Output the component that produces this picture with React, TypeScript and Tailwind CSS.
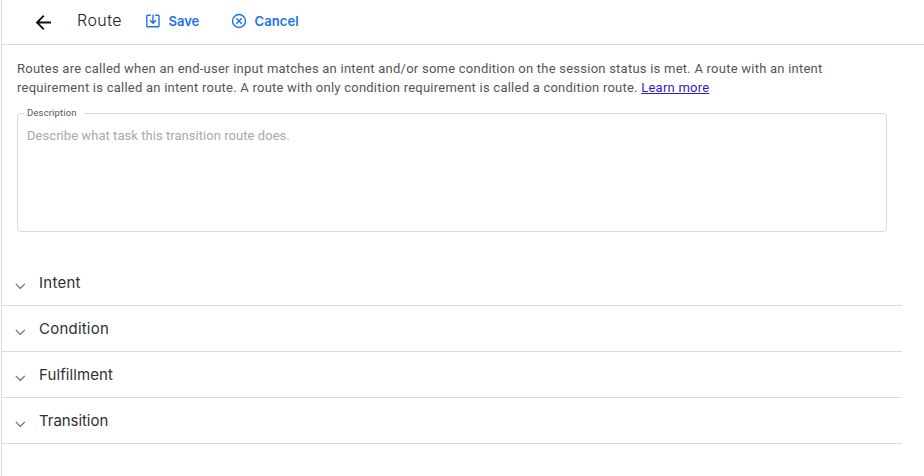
const sections = [
  { title: 'Intent', spacing: 'tracking-[0.25px]' },
  { title: 'Condition', spacing: 'tracking-[0.22px]' },
  { title: 'Fulfillment', spacing: 'tracking-[0.1px]' },
  { title: 'Transition', spacing: 'tracking-[-0.05px]' },
];

function BackIcon() {
  return (
    <svg width="16" height="16" viewBox="0 0 16 16" fill="none" stroke="#111" strokeWidth="1.9">
      <path d="M16 8.500H2.500M8.800 1.700L2 8.500l6.800 6.800" />
    </svg>
  );
}

function SaveIcon() {
  return (
    <svg width="14" height="14" viewBox="0 0 14 14" fill="none" stroke="#1a73e8" strokeWidth="1.4">
      <path d="M4.800 1.200H1.700a.9.9 0 0 0-.9.9v9.800c0 .5.4.9.9.9h10.400c.5 0 .9-.4.9-.9V2.100a.9.9 0 0 0-.9-.9H9.200M7 .6v8.300M4 6.200l3 3 3-3" />
    </svg>
  );
}

function CancelIcon() {
  return (
    <svg width="16" height="16" viewBox="0 0 16 16" fill="none" stroke="#1a73e8" strokeWidth="1.4">
      <circle cx="8" cy="8" r="6.5" />
      <path d="M5.3 5.3l5.4 5.4M10.7 5.3l-5.4 5.4" />
    </svg>
  );
}

function Chevron() {
  return (
    <svg width="12" height="8" viewBox="0 0 12 8" fill="none" stroke="#666" strokeWidth="1.1">
      <path d="M1.8 1.9L6.3 6.4l4.5-4.5" />
    </svg>
  );
}

export default function App() {
  return (
    <div className="flex h-[476px] w-[924px] overflow-hidden bg-white pl-px font-['Roboto',sans-serif]">
      <main className="flex flex-1 flex-col border-l border-[#d9dadc]">
        <header className="flex h-[45px] items-center border-b border-[#d9dadc] pl-[33px] font-['Inter',sans-serif]">
          <button><BackIcon /></button>
          <h1 className="ml-[26px] w-[68.500px] pb-1 text-base leading-5 font-light tracking-[0.45px] text-[#202124]">Route</h1>
          <button className="flex w-[85px] items-center gap-[9px] pb-0.5 text-[13px] leading-5 font-semibold text-[#1a73e8]">
            <SaveIcon />
            <span>Save</span>
          </button>
          <button className="flex items-center gap-2 pb-0.5 text-[13px] leading-5 font-semibold tracking-[0.1px] text-[#1a73e8]">
            <CancelIcon />
            <span>Cancel</span>
          </button>
        </header>
        <p className="mt-[14px] ml-[15px] text-[13px] leading-[19px] tracking-[0.237px] whitespace-nowrap text-[#555]">
          Routes are called when an end-user input matches an intent and/or some condition on the session status is met. A route with an intent
          <br />
          requirement is called an intent route. A route with only condition requirement is called a condition route.{' '}
          <a className="text-[#2a1fd0] underline">Learn more</a>
        </p>
        <fieldset className="mt-[10px] ml-[15px] h-[125px] w-[870px] rounded border border-[#d9dadc] pl-[6px]">
          <legend className="h-3 pr-[7px] pl-[3px] text-[9.5px] leading-3 tracking-[0.15px] text-[#555]">Description</legend>
          <p className="mt-[7px] pl-[3px] text-[13px] leading-5 tracking-[0.05px] text-[#a9a9a9]">Describe what task this transition route does.</p>
        </fieldset>
        <div className="mt-7 w-[900px] font-['Inter',sans-serif]">
          {sections.map(({ title, spacing }) => (
            <section key={title} className="flex h-[46px] items-center border-b border-[#d9dadc] pl-3">
              <span className="mt-[7px]"><Chevron /></span>
              <h2 className={`ml-[13px] text-[15px] leading-5 font-normal text-[#303134] ${spacing}`}>{title}</h2>
            </section>
          ))}
        </div>
      </main>
    </div>
  );
}
